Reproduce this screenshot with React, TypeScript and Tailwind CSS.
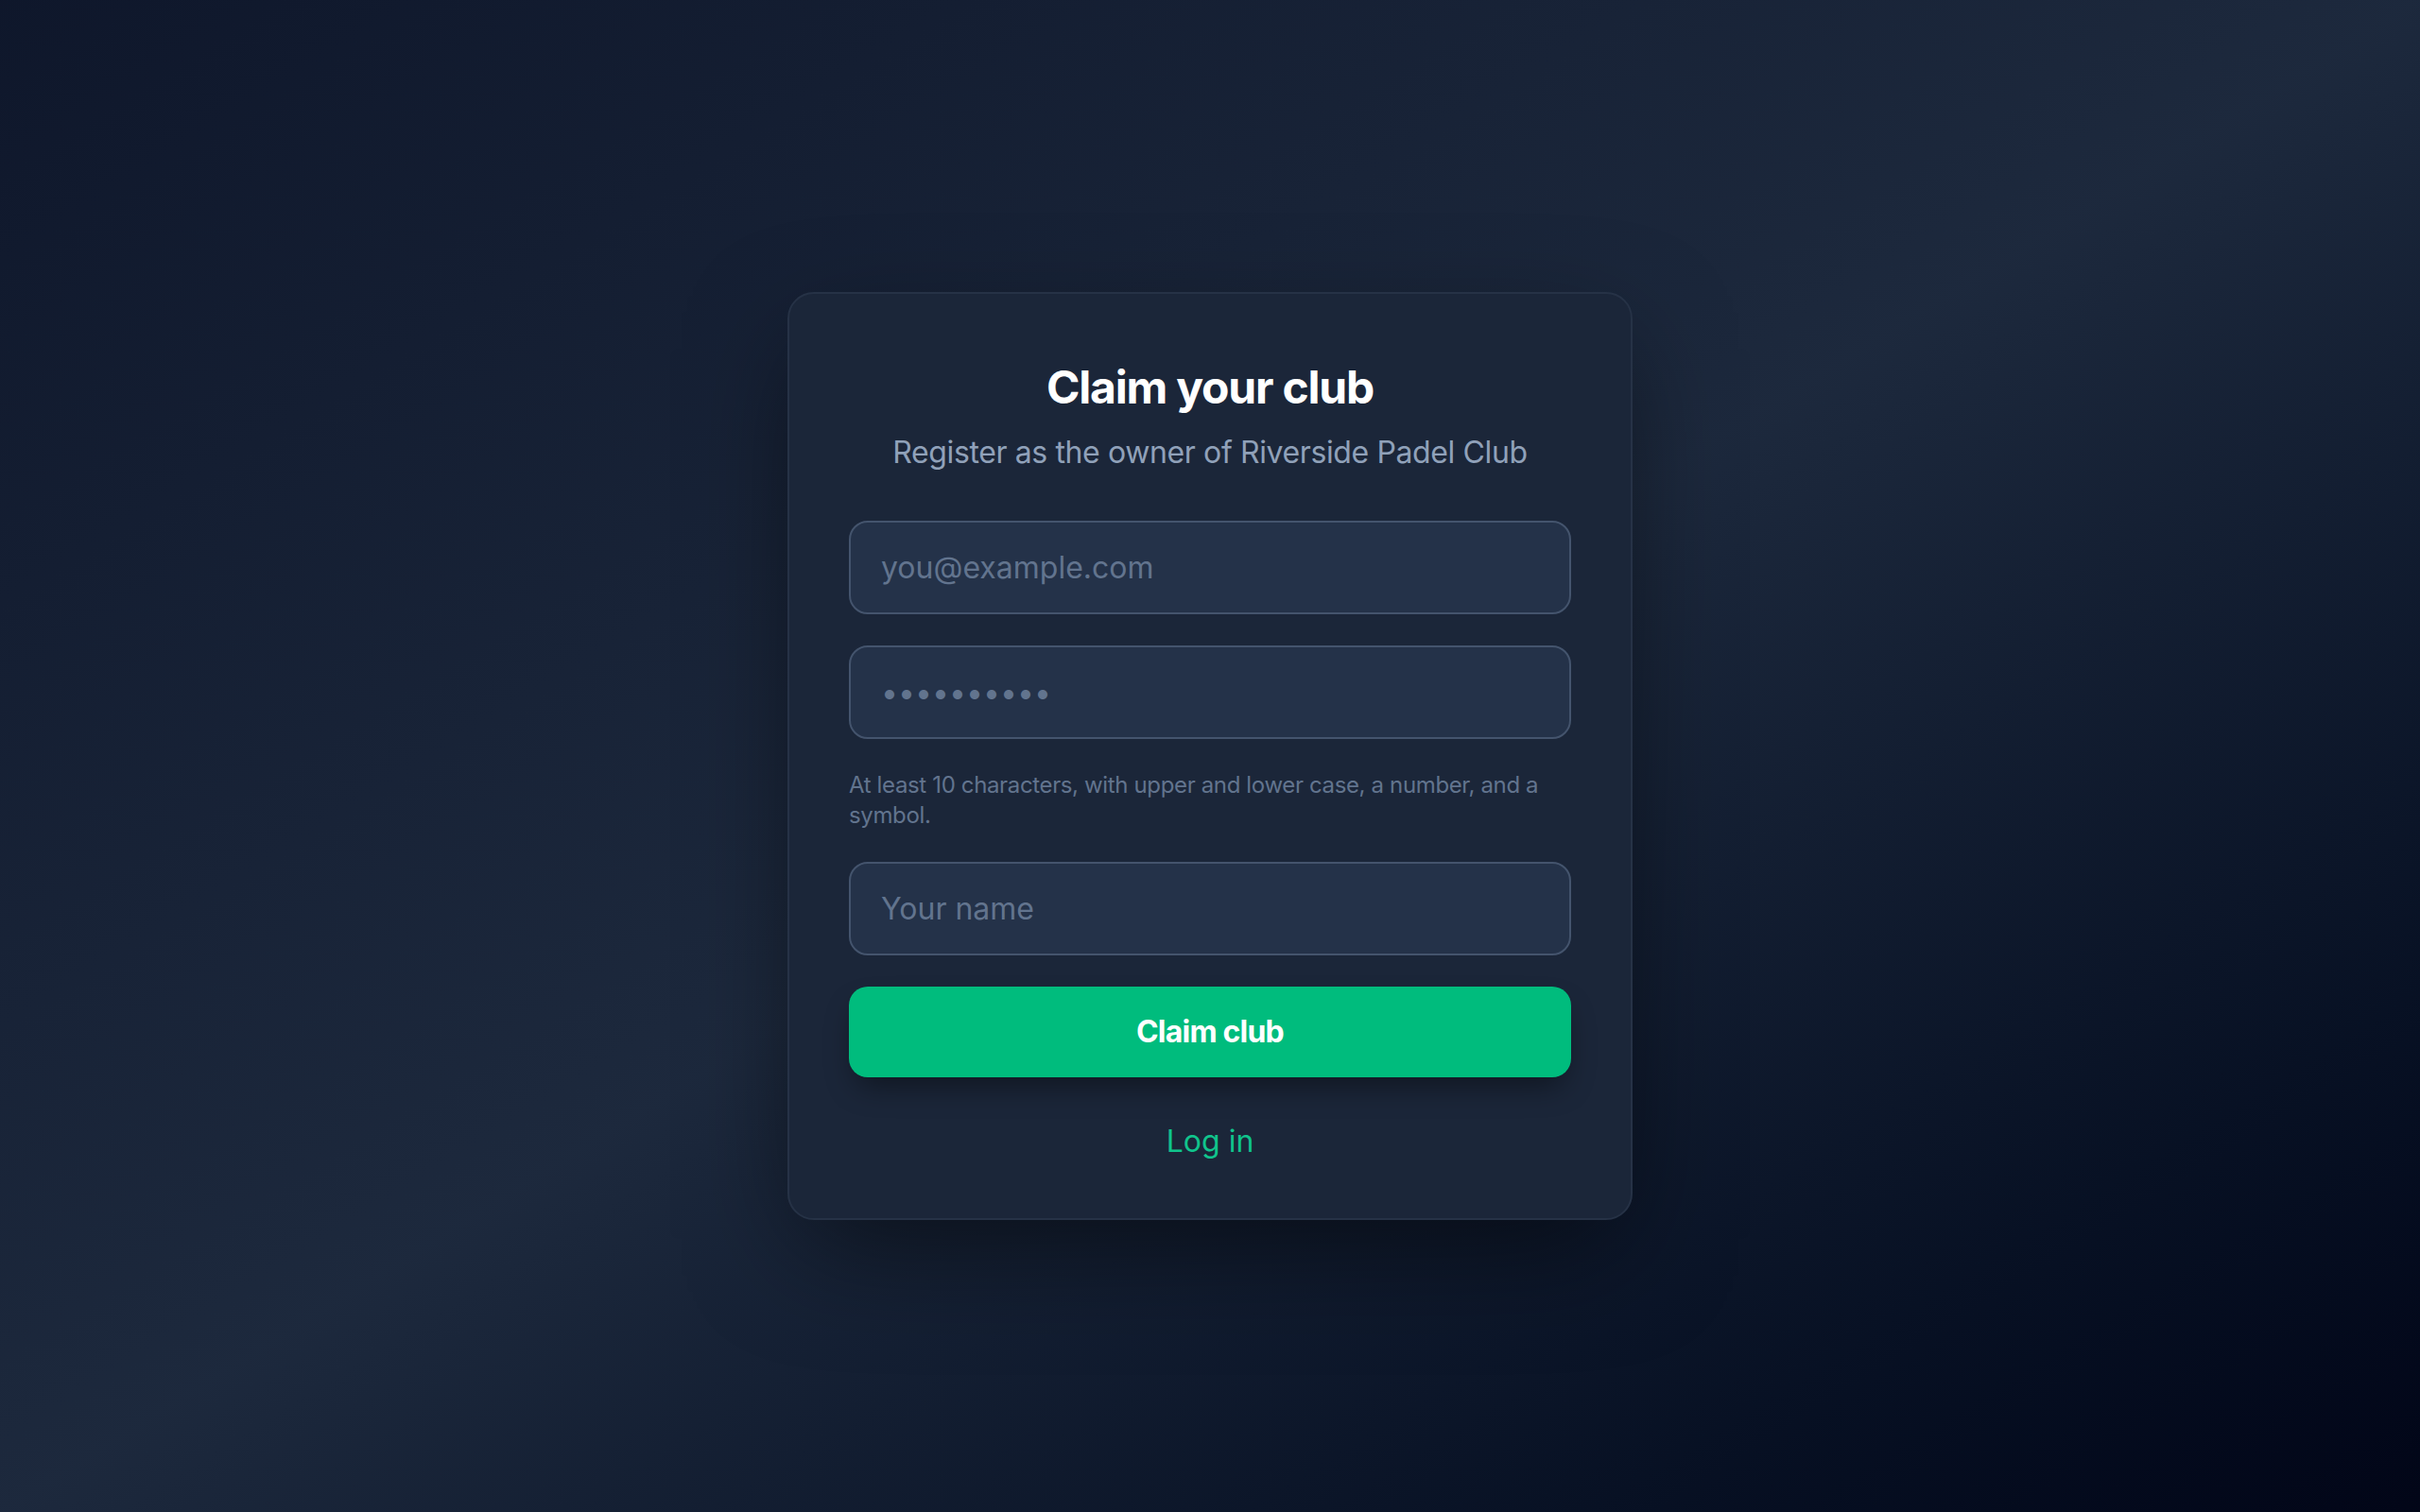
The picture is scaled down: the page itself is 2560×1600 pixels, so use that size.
import React from "react";

const font = { fontFamily: "Inter, 'Noto Sans', sans-serif" };

const inputClass =
  "w-full h-[99px] rounded-[20px] border-2 border-[#44546d] bg-[#243249] px-[32px] text-[32px] text-white placeholder:text-[#62748e] outline-none";

const App = () => {
  return (
    <div
      style={font}
      className="min-h-screen w-full flex items-center justify-center bg-linear-to-br from-slate-900 via-slate-800 to-slate-950"
    >
      <div className="w-[894px] rounded-[28px] border-2 border-[#263246] bg-[#1b2639] px-[63px] pt-[67px] pb-[57px] shadow-[0_40px_120px_-20px_rgba(0,0,0,0.55)]">
        <h1 className="text-center text-[48px] leading-[64px] font-bold tracking-tight text-white">
          Claim your club
        </h1>
        <p className="mt-[13px] text-center text-[32px] leading-[48px] tracking-[-0.012em] text-[#90a1b9]">
          Register as the owner of Riverside Padel Club
        </p>

        <form className="mt-[48px] flex flex-col gap-[33px]" onSubmit={(e) => e.preventDefault()}>
          <input type="email" placeholder="you@example.com" className={inputClass} />
          <input type="password" placeholder="••••••••••" className={inputClass} />
          <p className="text-[24px] leading-[32px] tracking-[-0.015em] text-[#62748e]">
            At least 10 characters, with upper and lower case, a number, and a symbol.
          </p>
          <input type="text" placeholder="Your name" className={inputClass} />
          <button
            type="submit"
            className="h-[96px] w-full rounded-[20px] bg-[#00bc7d] text-[32px] font-bold tracking-tight text-white shadow-[0_16px_32px_-8px_rgba(0,0,0,0.45)]"
          >
            Claim club
          </button>
        </form>

        <div className="mt-[44px] text-center">
          <a href="#" className="text-[32px] leading-[48px] text-[#10c48c]">
            Log in
          </a>
        </div>
      </div>
    </div>
  );
};

export default App;
